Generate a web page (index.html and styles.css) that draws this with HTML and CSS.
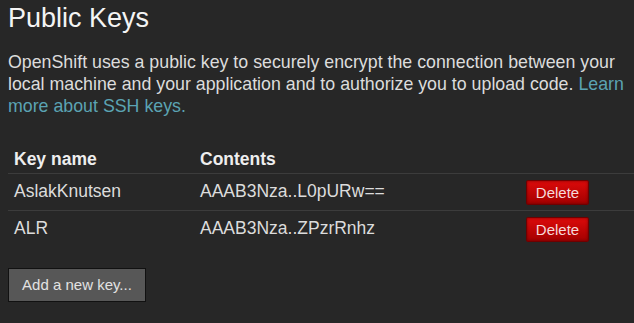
FILE: index.html
```html
<!DOCTYPE html>
<html lang="en">
  <head>
    <meta charset="UTF-8" />
    <title>Public Keys</title>
    <link rel="stylesheet" href="styles.css">
  </head>
  <body>
    <div class="container">
      <h1>Public Keys</h1>
      <p class="intro">
        OpenShift uses a public key to securely encrypt the connection between your local machine and your application and to authorize you to upload code. <a href="#">Learn more about SSH keys.</a>
      </p>
      <table class="keys">
        <thead>
          <tr>
            <th class="col-name">Key name</th>
            <th class="col-contents">Contents</th>
            <th class="col-actions"></th>
          </tr>
        </thead>
        <tbody>
          <tr>
            <td class="text">AslakKnutsen</td>
            <td class="text">AAAB3Nza..L0pURw==</td>
            <td><button class="delete-btn">Delete</button></td>
          </tr>
          <tr>
            <td class="text">ALR</td>
            <td class="text">AAAB3Nza..ZPzrRnhz</td>
            <td><button class="delete-btn">Delete</button></td>
          </tr>
        </tbody>
      </table>
      <button class="add-btn">Add a new key...</button>
    </div>
  </body>
</html>
```

FILE: styles.css
```css
* {
  box-sizing: border-box;
  margin: 0;
  padding: 0;
}

body {
  background-color: #272727;
  font-family: "Liberation Sans", Arial, sans-serif;
  color: #dcdcdc;
}

.container {
  padding: 0 0 0 8px;
}

h1 {
  margin-top: 2px;
  font-size: 27px;
  line-height: 32px;
  font-weight: normal;
  color: #f4f4f4;
}

.intro {
  margin-top: 17px;
  margin-bottom: 23px;
  font-size: 17.8px;
  line-height: 22px;
}

.intro a {
  color: #5ba3b3;
  text-decoration: none;
}

.keys {
  width: 100%;
  table-layout: fixed;
  border-collapse: collapse;
  font-size: 17.5px;
  line-height: 22px;
}

.col-name {
  width: 186px;
}

.col-contents {
  width: 326px;
}

th {
  text-align: left;
  font-weight: bold;
  color: #eeeeee;
  padding: 8px 6px 3px;
  vertical-align: bottom;
  border-bottom: 1px solid #3c3c3c;
}

td {
  height: 37px;
  padding: 0 6px;
  vertical-align: middle;
}

td.text {
  padding-bottom: 3px;
}

tbody tr:first-child td {
  border-bottom: 1px solid #3c3c3c;
}

.delete-btn {
  display: block;
  width: 63px;
  height: 25px;
  border: 1px solid #6e0000;
  border-radius: 2px;
  background: linear-gradient(to bottom, #dc0a0a, #a30000);
  box-shadow: inset 0 0 3px rgba(60, 0, 0, 0.6);
  color: #f5dada;
  font-family: "Liberation Sans", Arial, sans-serif;
  font-size: 15px;
  line-height: 17px;
  text-align: center;
}

.add-btn {
  margin-top: 20px;
  width: 138px;
  height: 34px;
  padding: 7px 0;
  border: 1px solid #111;
  background-color: #575757;
  color: #e2e2e2;
  font-family: "Liberation Sans", Arial, sans-serif;
  font-size: 15px;
  line-height: 18px;
}
```
